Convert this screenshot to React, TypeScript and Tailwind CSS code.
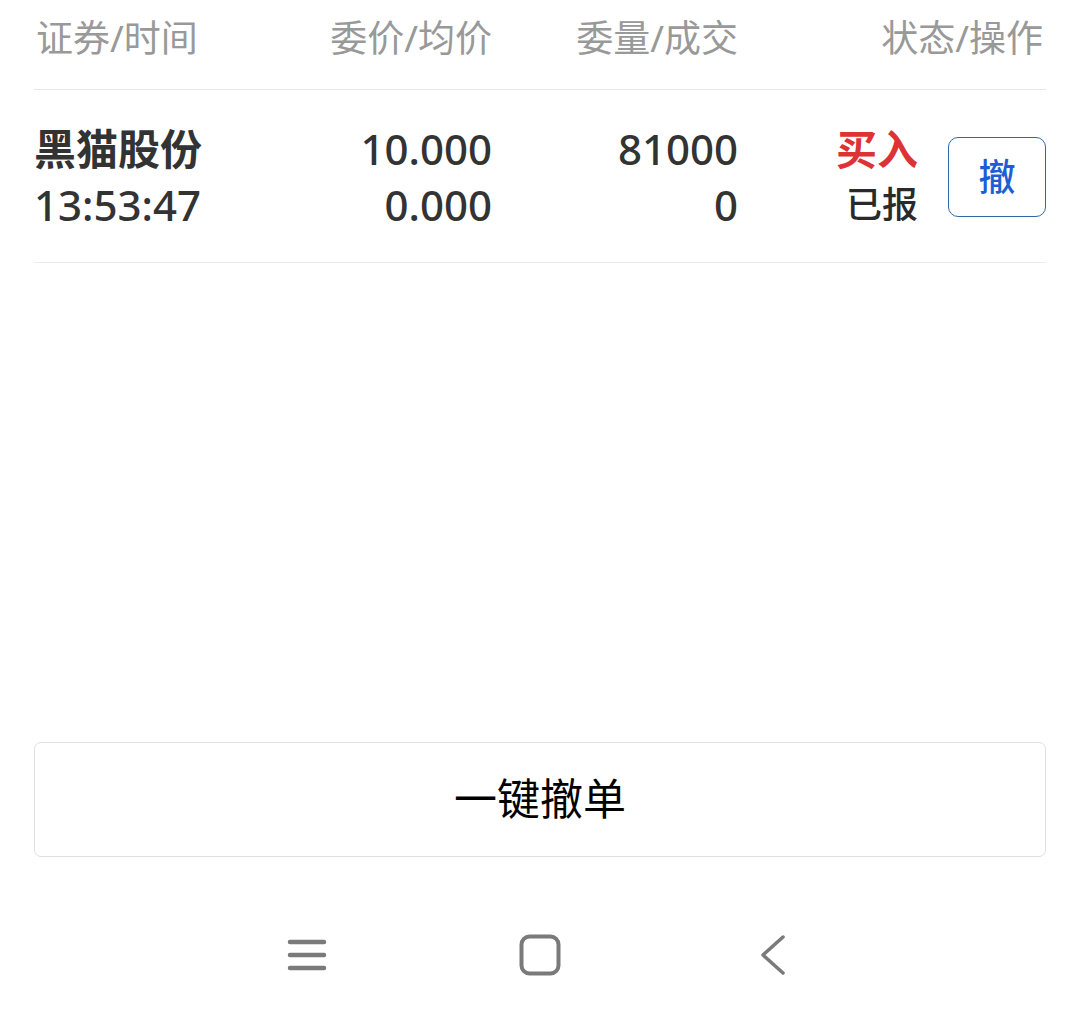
/* 委托撤单 — 当日委托列表 + 一键撤单 */

const FONT = { fontFamily: '"Noto Sans", "Noto Sans CJK SC", sans-serif' }

interface Ordem {
  nome: string
  hora: string
  preco: string
  media: string
  qtd: string
  feito: string
  lado: string
  estado: string
}

const ORDENS: Ordem[] = [
  { nome: '黑猫股份', hora: '13:53:47', preco: '10.000', media: '0.000', qtd: '81000', feito: '0', lado: '买入', estado: '已报' },
]

function NavBar() {
  return (
    <div className="h-[165px] pt-[77px]">
      <div className="mx-auto w-[699px] grid grid-cols-3 items-center justify-items-center">
        {/* menu */}
        <svg width="40" height="36" viewBox="0 0 40 36" fill="none" stroke="#7a7a7a" strokeWidth="4.5" strokeLinecap="round">
          <line x1="3" y1="5" x2="37" y2="5" />
          <line x1="3" y1="18" x2="37" y2="18" />
          <line x1="3" y1="31" x2="37" y2="31" />
        </svg>
        {/* home */}
        <svg width="42" height="42" viewBox="0 0 42 42" fill="none" stroke="#7a7a7a" strokeWidth="4">
          <rect x="2.5" y="2.5" width="37" height="37" rx="8" />
        </svg>
        {/* back */}
        <svg width="28" height="42" viewBox="0 0 28 42" fill="none" stroke="#7a7a7a" strokeWidth="3.5" strokeLinecap="round" strokeLinejoin="round">
          <polyline points="24,3 4,21 24,39" />
        </svg>
      </div>
    </div>
  )
}

export default function App() {
  return (
    <div className="w-[1080px] h-[1022px] bg-white flex flex-col overflow-hidden" style={FONT}>
      <div className="px-[34px]">
        {/* Cabeçalho */}
        <div className="flex items-center h-[90px] border-b border-[#e8e8e8] text-[37px] text-[#999999] pb-[14px]">
          <div className="w-[256px] pl-[2px]">证券/时间</div>
          <div className="w-[202px] text-right">委价/均价</div>
          <div className="w-[246px] text-right">委量/成交</div>
          <div className="flex-1 text-right pr-[3px]">状态/操作</div>
        </div>

        {/* Linhas */}
        {ORDENS.map(o => (
          <div key={o.nome + o.hora} className="flex items-center h-[173px] border-b border-[#ececec] text-[#333333] leading-[56px] pt-[2px]">
            <div className="w-[256px] flex flex-col">
              <span className="text-[42px] font-bold">{o.nome}</span>
              <span className="text-[42px] font-medium">{o.hora}</span>
            </div>
            <div className="w-[202px] flex flex-col items-end text-[42px] font-medium">
              <span>{o.preco}</span>
              <span>{o.media}</span>
            </div>
            <div className="w-[246px] flex flex-col items-end text-[42px] font-medium">
              <span>{o.qtd}</span>
              <span>{o.feito}</span>
            </div>
            <div className="flex-1 flex items-center justify-end">
              <div className="flex flex-col items-end">
                <span className="text-[41px] font-bold text-[#dd3336]">{o.lado}</span>
                <span className="text-[36px] font-medium text-[#2a2a2a]">{o.estado}</span>
              </div>
              <button className="ml-[30px] w-[98px] h-[80px] rounded-[10px] border-[1.5px] border-[#2f68a6] text-[#1c5fd4] text-[37px] font-medium flex items-center justify-center">
                撤
              </button>
            </div>
          </div>
        ))}
      </div>

      <div className="flex-1" />

      <div className="px-[34px]">
        <button className="w-full h-[115px] rounded-[7px] border border-[#e0e0e0] text-[43px] text-black flex items-center justify-center">
          一键撤单
        </button>
      </div>

      <NavBar />
    </div>
  )
}
